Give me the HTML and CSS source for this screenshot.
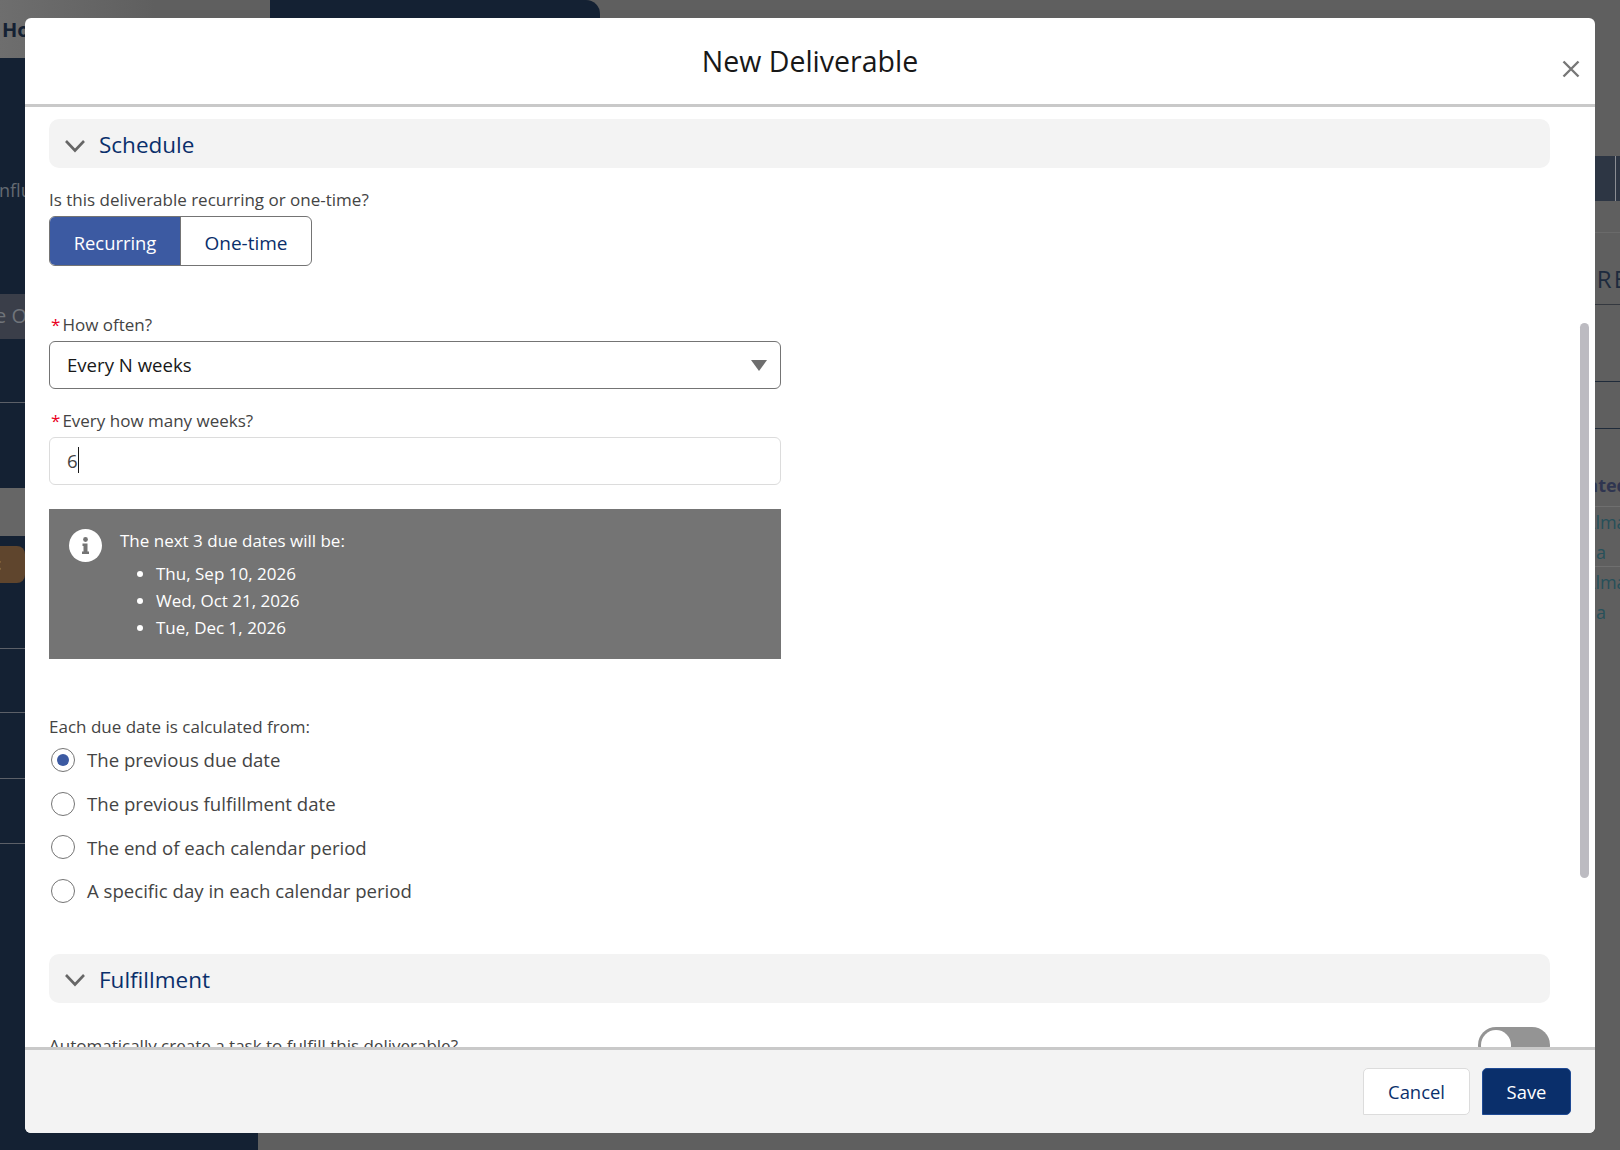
FILE: index.html
```html
<!DOCTYPE html>
<html>
<head>
	<meta charset="UTF-8">
	<title>New Deliverable</title>
	<link rel="stylesheet" href="styles.css">
</head>
<body>
	<div class="page">
		<div class="sidebar">
			<div class="side-home">Home</div>
			<div class="side-influ">Influencers</div>
			<div class="side-over">e Overview</div>
			<div class="side-line h64"></div>
			<div class="side-grey"></div>
			<div class="side-orange">t</div>
			<div class="side-line h66"></div>
			<div class="side-line h64"></div>
			<div class="side-line h66"></div>
			<div class="side-line h65"></div>
		</div>
		<div class="main">
			<div class="main-tab"></div>
			<div class="main-band"><span class="band-cut"></span></div>
			<div class="main-row r1"></div>
			<div class="main-row r2"><span class="more">MORE</span></div>
			<div class="main-row r3"></div>
			<div class="main-row r4"></div>
			<div class="main-row r5"><span class="col-head">Created</span></div>
			<div class="main-row r6"><span class="col-link">Alma<br>a</span></div>
			<div class="main-row r7"><span class="col-link">Alma<br>a</span></div>
		</div>
	</div>

	<div class="modal">
		<div class="modal-head">
			<h1 class="modal-title">New Deliverable</h1>
			<svg class="close" width="18" height="18" viewBox="0 0 18 18"><path d="M1.5 1.5L16.5 16.5M16.5 1.5L1.5 16.5" stroke="#777" stroke-width="2.4" fill="none"/></svg>
		</div>
		<div class="modal-body">
			<div class="section">
				<svg class="chev" width="22" height="14" viewBox="0 0 22 14"><path d="M2 2L11 11.5L20 2" stroke="#666" stroke-width="2.6" fill="none"/></svg>
				<span>Schedule</span>
			</div>
			<div class="label q1">Is this deliverable recurring or one-time?</div>
			<div class="toggle">
				<div class="toggle-on">Recurring</div>
				<div class="toggle-off">One-time</div>
			</div>
			<div class="label q2"><span class="star">*</span>How often?</div>
			<div class="select">
				<span>Every N weeks</span>
				<span class="arrow"></span>
			</div>
			<div class="label q3"><span class="star">*</span>Every how many weeks?</div>
			<div class="input"><span>6</span><span class="caret"></span></div>
			<div class="info">
				<svg class="info-icon" width="33" height="33" viewBox="0 0 33 33">
					<circle cx="16.5" cy="16.5" r="16.5" fill="#fff"/>
					<circle cx="16.5" cy="10.5" r="2.4" fill="#747474"/>
					<path d="M13.5 14.5H18.5V22.5H20V25H13V22.5H14.5V17H13.5Z" fill="#747474"/>
				</svg>
				<div>
					<div class="info-title">The next 3 due dates will be:</div>
					<ul class="info-list">
						<li>Thu, Sep 10, 2026</li>
						<li>Wed, Oct 21, 2026</li>
						<li>Tue, Dec 1, 2026</li>
					</ul>
				</div>
			</div>
			<div class="label q4">Each due date is calculated from:</div>
			<div class="radios">
				<div class="radio"><span class="dot checked"></span>The previous due date</div>
				<div class="radio"><span class="dot"></span>The previous fulfillment date</div>
				<div class="radio"><span class="dot"></span>The end of each calendar period</div>
				<div class="radio"><span class="dot"></span>A specific day in each calendar period</div>
			</div>
			<div class="section s2">
				<svg class="chev" width="22" height="14" viewBox="0 0 22 14"><path d="M2 2L11 11.5L20 2" stroke="#666" stroke-width="2.6" fill="none"/></svg>
				<span>Fulfillment</span>
			</div>
			<div class="auto-row">
				<div class="label auto-label">Automatically create a task to fulfill this deliverable?</div>
				<div class="switch"><span class="knob"></span></div>
			</div>
			<div class="thumb"></div>
		</div>
		<div class="modal-foot">
			<div class="btn cancel">Cancel</div>
			<div class="btn save">Save</div>
		</div>
	</div>
</body>
</html>
```

FILE: styles.css
```css
*{
	margin:0px;
	padding:0px;
	box-sizing:border-box;
}
body{
	width:1620px;
	height:1150px;
	overflow:hidden;
	background:#5f5f5f;
	font-family:"Open Sans","Noto Sans",sans-serif;
	position:relative;
}

/* page behind the dialog */
.page{
	display:flex;
	height:1150px;
}
.sidebar{
	width:258px;
	background:#142133;
	overflow:hidden;
	color:#646a72;
	font-size:18px;
	flex:none;
}
.side-home{
	height:58px;
	background:linear-gradient(to right,#6e6e6e,#5f5f5f 60%);
	color:#142133;
	font-size:20px;
	font-weight:700;
	line-height:60px;
	padding-left:2px;
}
.side-influ{
	height:236px;
	padding-top:120px;
	margin-left:-6px;
}
.side-over{
	height:45px;
	background:#3a3e49;
	line-height:44px;
	margin-left:-5px;
	white-space:nowrap;
	font-size:20px;
	color:#70747a;
}
.side-line{
	border-bottom:1px solid #5c6068;
}
.side-line.h64{
	height:64px;
}
.side-line.h65{
	height:65px;
}
.side-line.h66{
	height:66px;
}
.side-grey{
	height:48px;
	margin-top:85px;
	background:#666;
}
.side-orange{
	width:25px;
	height:37px;
	margin-top:10px;
	background:#5f452d;
	border-radius:0 8px 8px 0;
	color:#8c8c8c;
	line-height:36px;
	font-size:16px;
	font-weight:700;
	text-indent:-6px;
}
.main{
	flex:1;
	overflow:hidden;
}
.main-tab{
	width:330px;
	height:18px;
	margin-left:12px;
	background:#142133;
	border-radius:0 14px 0 0;
}
.main-band{
	height:45px;
	margin-top:138px;
	background:#2d3644;
	position:relative;
}
.band-cut{
	position:absolute;
	right:4px;
	top:0;
	bottom:0;
	width:1px;
	background:#8a8d93;
}
.main-row{
	display:flex;
	justify-content:flex-end;
	overflow:hidden;
	white-space:nowrap;
}
.r1{
	height:32px;
	border-bottom:1px solid #6a6a6a;
}
.r2{
	height:72px;
	border-bottom:1px solid #34383f;
	align-items:flex-end;
	padding-bottom:9px;
}
.more{
	color:#1d2a3d;
	font-size:24px;
	letter-spacing:2px;
	margin-right:-9px;
}
.r3{
	height:77px;
	border-bottom:1px solid #1f2b3a;
}
.r4{
	height:47px;
	border-bottom:1px solid #1f2b3a;
}
.r5{
	height:78px;
	border-bottom:1px solid #6f6f6f;
	align-items:flex-end;
	padding-bottom:9px;
}
.col-head{
	color:#2f3550;
	font-size:18px;
	font-weight:700;
	margin-right:-8px;
}
.r6,.r7{
	height:60px;
	line-height:30px;
	color:#27505a;
	font-size:18px;
	border-bottom:1px solid #6f6f6f;
	justify-content:flex-start;
	padding-left:1332px;
}
.r7{
	border-bottom:0;
}
.col-link{
	display:block;
	margin-left:6px;
	width:40px;
	text-indent:-12px;
}

/* dialog */
.modal{
	position:absolute;
	left:25px;
	top:18px;
	width:1570px;
	height:1115px;
	background:#fff;
	border-radius:6px;
	display:flex;
	flex-direction:column;
	overflow:hidden;
}
.modal-head{
	height:89px;
	border-bottom:3px solid #c9c9c9;
	flex:none;
	position:relative;
	text-align:center;
}
.modal-title{
	font-size:28.5px;
	font-weight:400;
	color:#181818;
	line-height:87px;
}
.close{
	position:absolute;
	right:15px;
	top:42px;
}
.modal-body{
	flex:1;
	overflow:hidden;
	position:relative;
	padding:12px 45px 0 24px;
}
.section{
	height:49px;
	background:#f3f3f3;
	border-radius:10px;
	display:flex;
	align-items:center;
	padding:2px 0 0 15px;
	color:#0a2f6b;
	font-size:22.5px;
	gap:13px;
}
.chev{
	margin-top:2px;
}
.s2{
	margin-top:41px;
}
.label{
	color:#444;
	font-size:17px;
	line-height:24px;
}
.q1{
	margin-top:20px;
}
.q2{
	margin-top:47px;
}
.q3{
	margin-top:20px;
}
.q4{
	margin-top:56px;
}
.auto-label{
	padding-top:7px;
}
.star{
	color:#ea001e;
	margin:0 2px 0 2px;
}
.toggle{
	display:flex;
	width:263px;
	height:50px;
	margin-top:4px;
	border:1px solid #747474;
	border-radius:6px;
	overflow:hidden;
	font-size:19px;
	line-height:51px;
	text-align:center;
}
.toggle-on{
	width:131px;
	background:#3c5aa2;
	color:#fff;
	border-right:1px solid #747474;
	font-size:18.4px;
}
.toggle-off{
	flex:1;
	color:#0a2f6b;
	line-height:52px;
}
.select,.input{
	width:732px;
	height:48px;
	margin-top:4px;
	border-radius:6px;
	display:flex;
	align-items:center;
	padding:0 17px 2px;
	font-size:18.6px;
}
.select{
	border:1px solid #747474;
	justify-content:space-between;
	color:#181818;
	padding-right:13px;
}
.arrow{
	width:0;
	height:0;
	border-left:8px solid transparent;
	border-right:8px solid transparent;
	border-top:11px solid #6e6e6e;
	margin-top:2px;
}
.input{
	border:1px solid #dcdcdc;
	color:#444;
}
.caret{
	width:1px;
	height:26px;
	background:#181818;
}
.info{
	width:732px;
	height:150px;
	margin-top:24px;
	background:#747474;
	color:#fff;
	display:flex;
	padding:20px 20px 0 20px;
	gap:18px;
	font-size:17px;
}
.info-title{
	line-height:24px;
}
.info-list{
	margin-top:7px;
	padding-left:36px;
}
.info-list li{
	line-height:27px;
}
.radios{
	margin-top:-1px;
}
.radio{
	height:43.7px;
	display:flex;
	align-items:center;
	color:#444;
	font-size:18.6px;
	padding-left:2px;
	gap:12px;
}
.dot{
	width:24px;
	height:24px;
	border:1px solid #747474;
	border-radius:50%;
	background:#fff;
	display:flex;
	align-items:center;
	justify-content:center;
}
.dot.checked::after{
	content:"";
	width:12px;
	height:12px;
	border-radius:50%;
	background:#3c5aa2;
}
.auto-row{
	display:flex;
	justify-content:space-between;
	margin-top:24px;
}
.switch{
	width:72px;
	height:36px;
	background:#949494;
	border-radius:18px;
	padding:3px;
}
.knob{
	display:block;
	width:30px;
	height:30px;
	border-radius:50%;
	background:#fff;
}
.thumb{
	position:absolute;
	right:6px;
	top:216px;
	width:9px;
	height:555px;
	background:#bcbbc1;
	border-radius:5px;
}
.modal-foot{
	height:86px;
	border-top:3px solid #c9c9c9;
	background:#f3f3f3;
	flex:none;
	display:flex;
	justify-content:flex-end;
	align-items:flex-start;
	padding:18px 24px 0 0;
	gap:12px;
}
.btn{
	height:47px;
	line-height:46px;
	border-radius:5px 5px 5px 0;
	text-align:center;
	font-size:18.4px;
}
.cancel{
	width:107px;
	background:#fff;
	border:1px solid #dcdcdc;
	color:#0a2f6b;
}
.save{
	width:89px;
	background:#0a2f6b;
	border:1px solid #1f4a94;
	color:#fff;
}
```
